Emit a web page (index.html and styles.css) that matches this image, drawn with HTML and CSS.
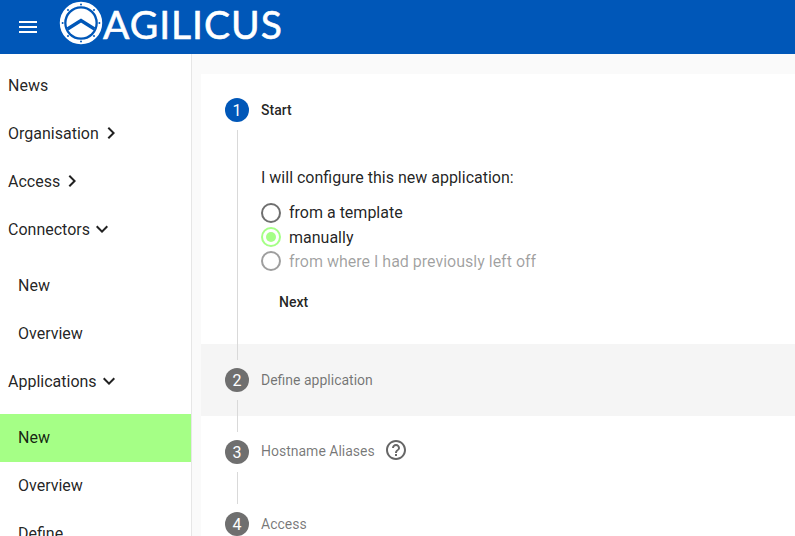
FILE: index.html
```html
<!DOCTYPE html>
<html lang="en">
<head>
    <meta charset="UTF-8">
    <meta name="viewport" content="width=device-width, initial-scale=1.0">
    <title>Agilicus - New Application</title>
    <link rel="stylesheet" href="styles.css">
</head>
<body>
    <header class="toolbar">
        <button class="menu-button" aria-label="Menu">
            <svg width="24" height="24" viewBox="0 0 24 24"><path fill="#fff" d="M3 18h18v-2H3v2zm0-5h18v-2H3v2zm0-7v2h18V6H3z"/></svg>
        </button>
        <svg class="logo-mark" width="44" height="44" viewBox="0 0 44 44">
            <circle cx="22" cy="22" r="19" fill="none" stroke="#fff" stroke-width="4.4"/>
            <circle cx="22" cy="22" r="14.5" fill="#fff"/>
            <path fill="none" stroke="#0057b8" stroke-width="3.4" d="M8.5 28L22 19.5 35.5 28"/>
            <g fill="#0057b8">
                <circle cx="22" cy="3.6" r="1"/><circle cx="22" cy="40.4" r="1"/>
                <circle cx="3.6" cy="22" r="1"/><circle cx="40.4" cy="22" r="1"/>
                <circle cx="9" cy="9" r="1"/><circle cx="35" cy="9" r="1"/>
                <circle cx="9" cy="35" r="1"/><circle cx="35" cy="35" r="1"/>
            </g>
        </svg>
        <span class="logo-text">AGILICUS</span>
    </header>

    <div class="layout">
        <nav class="sidenav">
            <a class="nav-item">News</a>
            <a class="nav-item">Organisation
                <svg class="chevron" width="24" height="24" viewBox="0 0 24 24"><path d="M10 6L8.59 7.41 13.17 12l-4.58 4.59L10 18l6-6z"/></svg>
            </a>
            <a class="nav-item">Access
                <svg class="chevron" width="24" height="24" viewBox="0 0 24 24"><path d="M10 6L8.59 7.41 13.17 12l-4.58 4.59L10 18l6-6z"/></svg>
            </a>
            <a class="nav-item">Connectors
                <svg class="chevron" width="24" height="24" viewBox="0 0 24 24"><path d="M16.59 8.59L12 13.17 7.41 8.59 6 10l6 6 6-6z"/></svg>
            </a>
            <div class="submenu">
                <a class="nav-item">New</a>
                <a class="nav-item">Overview</a>
            </div>
            <a class="nav-item">Applications
                <svg class="chevron" width="24" height="24" viewBox="0 0 24 24"><path d="M16.59 8.59L12 13.17 7.41 8.59 6 10l6 6 6-6z"/></svg>
            </a>
            <div class="submenu">
                <a class="nav-item active">New</a>
                <a class="nav-item">Overview</a>
                <a class="nav-item">Define</a>
            </div>
        </nav>

        <main class="content">
            <section class="stepper">
                <div class="step-header">
                    <span class="step-icon current">1</span>
                    <span class="step-label current">Start</span>
                </div>
                <div class="step-body">
                    <div class="step-inner">
                        <p class="question">I will configure this new application:</p>
                        <div class="radio-group">
                            <label class="radio"><span class="radio-ring"></span>from a template</label>
                            <label class="radio checked"><span class="radio-ring"></span>manually</label>
                            <label class="radio disabled"><span class="radio-ring"></span>from where I had previously left off</label>
                        </div>
                        <button class="next-button">Next</button>
                    </div>
                </div>

                <div class="step-header hovered">
                    <span class="step-icon">2</span>
                    <span class="step-label">Define application</span>
                </div>
                <div class="step-gap"></div>

                <div class="step-header">
                    <span class="step-icon">3</span>
                    <span class="step-label with-help">Hostname Aliases</span>
                    <svg class="help-icon" width="24" height="24" viewBox="0 0 24 24"><path d="M11 18h2v-2h-2v2zm1-16C6.48 2 2 6.48 2 12s4.48 10 10 10 10-4.48 10-10S17.52 2 12 2zm0 18c-4.41 0-8-3.59-8-8s3.59-8 8-8 8 3.59 8 8-3.59 8-8 8zm0-14c-2.21 0-4 1.79-4 4h2c0-1.1.9-2 2-2s2 .9 2 2c0 2-3 1.75-3 5h2c0-2.25 3-2.5 3-5 0-2.21-1.79-4-4-4z"/></svg>
                </div>
                <div class="step-gap"></div>

                <div class="step-header">
                    <span class="step-icon">4</span>
                    <span class="step-label">Access</span>
                </div>
            </section>
        </main>
    </div>
</body>
</html>
```

FILE: styles.css
```css
html, body {
    height: 100%;
    overflow: hidden;
}

body {
    margin: 0;
    font-family: Roboto, "Liberation Sans", sans-serif;
    color: rgba(0, 0, 0, 0.87);
    background: #fff;
}

.toolbar {
    display: flex;
    align-items: center;
    height: 54px;
    background: #0057b8;
    color: #fff;
}

.menu-button {
    display: flex;
    width: 24px;
    height: 24px;
    margin-left: 16px;
    padding: 0;
    border: none;
    background: transparent;
}

.logo-mark {
    margin-left: 19px;
    margin-top: -8px;
}

.logo-text {
    margin-top: -6px;
    font-family: Lato, sans-serif;
    font-size: 39px;
    letter-spacing: 1px;
    line-height: 44px;
    -webkit-text-stroke: 0.6px #fff;
}

.layout {
    display: flex;
    height: calc(100% - 54px);
}

.sidenav {
    flex: 0 0 191px;
    padding-top: 7px;
    border-right: 1px solid #e6e6e6;
    overflow: hidden;
}

.nav-item {
    display: flex;
    align-items: center;
    height: 48px;
    padding-left: 8px;
    font-size: 16px;
}

.chevron {
    fill: rgba(0, 0, 0, 0.87);
}

.submenu {
    padding-top: 8px;
}

.submenu .nav-item {
    padding-left: 18px;
}

.submenu .nav-item.active {
    box-sizing: border-box;
    margin: 1px 0 -1px;
    padding-bottom: 2px;
    background: #a5ff86;
}

.content {
    flex: 1;
    padding: 20px 0 0 9px;
    background: #fafafa;
    overflow: hidden;
}

.stepper {
    background: #fff;
    height: 100%;
}

.step-header {
    display: flex;
    align-items: center;
    height: 72px;
    padding-left: 24px;
    box-sizing: border-box;
}

.step-header.hovered {
    background: #f5f5f5;
}

.step-icon {
    display: flex;
    align-items: center;
    justify-content: center;
    width: 24px;
    height: 24px;
    border-radius: 50%;
    background: #6f6f6f;
    color: #fff;
    font-size: 16px;
}

.step-icon.current {
    background: #0057b8;
}

.step-label {
    margin-left: 12px;
    font-size: 14px;
    color: rgba(0, 0, 0, 0.54);
}

.step-label.current {
    font-weight: 500;
    color: rgba(0, 0, 0, 0.87);
}

.step-label.with-help {
    margin-top: -2px;
}

.help-icon {
    margin-left: 9px;
    margin-top: -4px;
    fill: #666;
}

/* connector lines run 16px into the headers on both sides */
.step-body, .step-gap {
    position: relative;
    margin: -16px 0 -16px 36px;
    border-left: 1px solid #d9d9d9;
}

.step-gap {
    height: 32px;
}

.step-body {
    height: 230px;
}

.step-inner {
    padding: 38px 0 0 23px;
}

.question {
    margin: 0 0 12px;
    font-size: 16px;
    line-height: 20px;
}

.radio-group {
    display: flex;
    flex-direction: column;
}

.radio {
    display: flex;
    align-items: center;
    height: 24px;
    font-size: 16px;
}

.radio:first-child {
    height: 25px;
}

.radio-ring {
    position: relative;
    width: 20px;
    height: 20px;
    margin-right: 8px;
    border: 2px solid #6f6f6f;
    border-radius: 50%;
    box-sizing: border-box;
}

.radio.checked .radio-ring {
    border-color: #a5ff86;
}

.radio.checked .radio-ring::after {
    content: "";
    position: absolute;
    inset: 3px;
    border-radius: 50%;
    background: #a5ff86;
}

.radio.disabled {
    color: rgba(0, 0, 0, 0.38);
}

.radio.disabled .radio-ring {
    border-color: #9e9e9e;
}

.next-button {
    display: block;
    margin: 11px 0 0 2px;
    padding: 0 16px;
    height: 36px;
    border: none;
    background: transparent;
    font-family: inherit;
    font-size: 14px;
    font-weight: 500;
    color: rgba(0, 0, 0, 0.87);
}
```
